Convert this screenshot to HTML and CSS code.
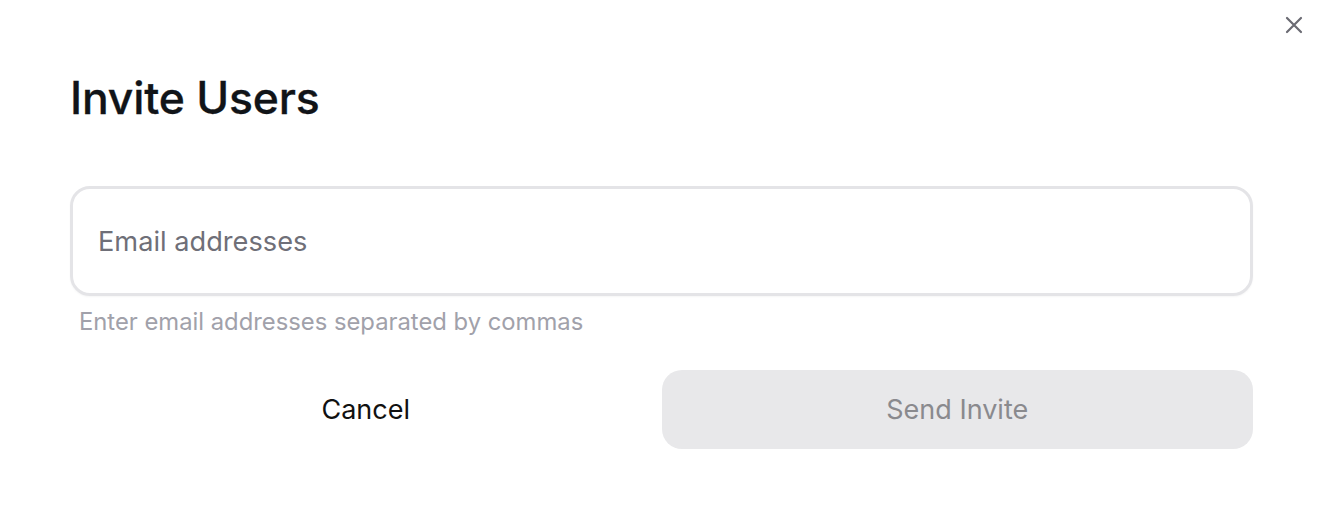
FILE: index.html
```html
<!DOCTYPE html>
<html>
<head>
<meta charset="utf-8">
<link rel="stylesheet" href="styles.css">
</head>
<body>
<div class="dialog">
  <button class="close" aria-label="Close">
    <svg width="20" height="20" viewBox="0 0 20 20" fill="none" stroke="currentColor" stroke-width="2.2" stroke-linecap="round"><path d="M3 3L17 17M17 3L3 17"/></svg>
  </button>
  <h1 class="title">Invite Users</h1>
  <div class="field">
    <div class="input">Email addresses</div>
    <p class="hint">Enter email addresses separated by commas</p>
  </div>
  <div class="actions">
    <button class="btn btn-cancel">Cancel</button>
    <button class="btn btn-send">Send Invite</button>
  </div>
</div>
</body>
</html>
```
FILE: styles.css
```css
* { box-sizing: border-box; }
html, body { margin: 0; background: #fff; }
body { font-family: Inter, "Noto Sans", sans-serif; }
.dialog {
  position: relative;
  padding: 70px 73px 0 70px;
}
.close {
  position: absolute;
  top: 15px;
  right: 22px;
  width: 20px;
  height: 20px;
  padding: 0;
  border: 0;
  background: none;
  color: #6b6b73;
}
.close svg { display: block; }
.title {
  margin: 0;
  font-size: 44.5px;
  line-height: 56px;
  font-weight: 500;
  color: #111418;
  letter-spacing: -0.2px;
  -webkit-text-stroke: 0.3px #111418;
}
.field { margin-top: 60px; }
.input {
  height: 110px;
  border: 3px solid #e4e4e7;
  border-radius: 20px;
  padding: 0 25px;
  display: flex;
  align-items: center;
  font-size: 27.2px;
  color: #6f6f78;
  box-shadow: 0 1px 2px rgba(0, 0, 0, 0.04);
}
.hint {
  margin: 12px 0 0 9px;
  font-size: 23.8px;
  line-height: 28px;
  color: #a1a1aa;
}
.actions {
  display: flex;
  margin-top: 34px;
}
.btn {
  flex: 1;
  height: 79px;
  border: 0;
  border-radius: 20px;
  font-family: Inter, "Noto Sans", sans-serif;
  font-size: 27px;
  background: none;
}
.btn-cancel { color: #111; }
.btn-send { background: #e8e8ea; color: #8a8a8e; }
```
